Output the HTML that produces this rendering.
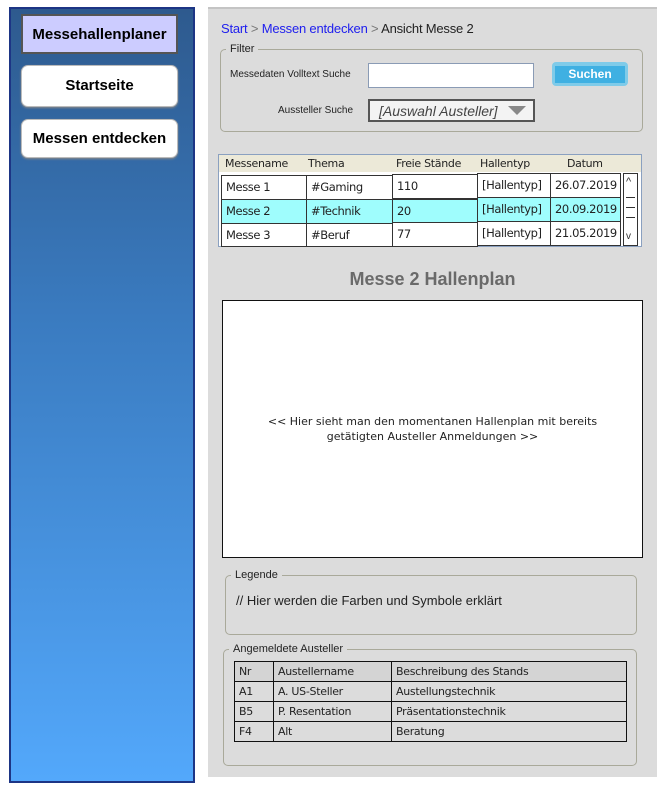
<!DOCTYPE html>
<html><head><meta charset="utf-8"><style>
*{margin:0;padding:0;box-sizing:border-box}
body{width:669px;height:800px;background:#fff;position:relative;font-family:"Liberation Sans",sans-serif;overflow:hidden}
.a{position:absolute}
.side{left:9px;top:7px;width:186px;height:776px;background:linear-gradient(#2e5a8e,#3a7bc0 40%,#53a8fb);border:2px solid #1d3585}
.btn{position:absolute;left:21px;width:157px;background:#fff;border:1px solid #bbb;border-radius:7px;font-weight:bold;font-size:15px;text-align:center;box-shadow:0 1px 2px #888}
.main{left:208px;top:7px;width:449px;height:770px;background:#dcdcdc;border-top:2px solid #c4c4c4}
.sk{font-family:"Comic Sans MS","DejaVu Sans",sans-serif;font-size:12px;color:#222}
.fs{position:absolute;border:1px solid #a9a99a;border-radius:5px}
.lg{position:absolute;background:#dcdcdc;font-size:11px;padding:0 4px;color:#222}
.cell{position:absolute;border:1.5px solid #333;background:#fff;padding-left:4px;font-size:11.5px;line-height:23px;font-family:"DejaVu Sans",sans-serif;color:#222;letter-spacing:-.4px}
.cy{background:#9ffdfd}
.hd{position:absolute;top:157px;font-size:11px;font-family:"DejaVu Sans",sans-serif;color:#222;letter-spacing:-.3px}
table{border-collapse:collapse;font-family:"DejaVu Sans",sans-serif;font-size:11px;color:#222}
td{border:1px solid #111;height:20px;padding-left:4px;letter-spacing:-.3px}
</style></head><body>
<div class="a side"></div>
<div class="btn" style="top:14px;height:40px;line-height:38px;background:#ccccff;border:2px solid #555;border-radius:0;box-shadow:none">Messehallenplaner</div>
<div class="btn" style="top:65px;height:42px;line-height:40px">Startseite</div>
<div class="btn" style="top:119px;height:39px;line-height:37px">Messen entdecken</div>

<div class="a main"></div>
<div class="a" style="left:221px;top:21px;font-size:13px;color:#777;letter-spacing:-.2px"><span style="color:#2020ee">Start</span> &gt; <span style="color:#2020ee">Messen entdecken</span> &gt; <span style="color:#222">Ansicht Messe 2</span></div>

<div class="fs" style="left:220px;top:49px;width:423px;height:83px"></div>
<div class="lg" style="left:226px;top:43px">Filter</div>
<div class="a" style="left:230px;top:69px;font-size:10px;color:#222">Messedaten Volltext Suche</div>
<div class="a" style="left:368px;top:63px;width:166px;height:25px;background:#fff;border:1px solid #8a9bb5"></div>
<div class="a" style="left:552px;top:62px;width:76px;height:24px;background:#7fcbe9;border-radius:4px"></div>
<div class="a" style="left:555px;top:66px;width:70px;height:17px;background:#3fb0e2;color:#fff;font-weight:bold;font-size:12px;text-align:center;line-height:17px">Suchen</div>
<div class="a" style="left:278px;top:105px;font-size:10px;color:#222">Aussteller Suche</div>
<div class="a" style="left:368px;top:99px;width:167px;height:23px;background:#f3f3f3;border:2px solid #555;font-style:italic;font-size:14px;color:#444;padding-left:9px;line-height:20px">[Auswahl Austeller]</div>
<div class="a" style="left:508px;top:106px;width:0;height:0;border-left:9px solid transparent;border-right:9px solid transparent;border-top:9px solid #888"></div>

<div class="a" style="left:218px;top:154px;width:424px;height:93px;border:1px solid #8aa0c0;background:#fff"></div>
<div class="a" style="left:219px;top:155px;width:422px;height:17px;background:#ece9d8"></div>
<div class="hd" style="left:225px">Messename</div>
<div class="hd" style="left:308px">Thema</div>
<div class="hd" style="left:396px">Freie Stände</div>
<div class="hd" style="left:480px">Hallentyp</div>
<div class="hd" style="left:567px">Datum</div>

<div class="cell" style="left:221px;top:175px;width:87px;height:25px">Messe 1</div>
<div class="cell" style="left:306px;top:175px;width:87px;height:25px">#Gaming</div>
<div class="cell" style="left:392px;top:174px;width:86px;height:25px">110</div>
<div class="cell" style="left:477px;top:173px;width:74px;height:25px">[Hallentyp]</div>
<div class="cell" style="left:550px;top:173px;width:71px;height:25px">26.07.2019</div>
<div class="cell cy" style="left:221px;top:199px;width:87px;height:25px">Messe 2</div>
<div class="cell cy" style="left:306px;top:199px;width:87px;height:25px">#Technik</div>
<div class="cell cy" style="left:392px;top:199px;width:86px;height:25px">20</div>
<div class="cell cy" style="left:477px;top:197px;width:74px;height:25px">[Hallentyp]</div>
<div class="cell cy" style="left:550px;top:197px;width:71px;height:25px">20.09.2019</div>
<div class="cell" style="left:221px;top:223px;width:87px;height:24px">Messe 3</div>
<div class="cell" style="left:306px;top:223px;width:87px;height:24px">#Beruf</div>
<div class="cell" style="left:392px;top:222px;width:86px;height:25px">77</div>
<div class="cell" style="left:477px;top:221px;width:74px;height:25px">[Hallentyp]</div>
<div class="cell" style="left:550px;top:221px;width:71px;height:25px">21.05.2019</div>
<div class="a" style="left:623px;top:173px;width:15px;height:73px;border:1.5px solid #333;background:#fff"></div>
<div class="a" style="left:626px;top:176px;font-size:11px;color:#333">^</div>
<div class="a" style="left:626px;top:197px;width:9px;border-top:1px solid #333"></div>
<div class="a" style="left:626px;top:207px;width:9px;border-top:1px solid #333"></div>
<div class="a" style="left:626px;top:217px;width:9px;border-top:1px solid #333"></div>
<div class="a" style="left:626px;top:231px;font-size:10px;color:#333">v</div>

<div class="a" style="left:208px;top:269px;width:449px;text-align:center;font-size:18px;font-weight:bold;color:#6a6a6a">Messe 2 Hallenplan</div>
<div class="a sk" style="left:222px;top:300px;width:421px;height:258px;background:#fff;border:1.5px solid #111;text-align:center;padding-top:113px;font-size:11px;line-height:15px">&lt;&lt; Hier sieht man den momentanen Hallenplan mit bereits<br>getätigten Austeller Anmeldungen &gt;&gt;</div>

<div class="fs" style="left:225px;top:575px;width:412px;height:60px"></div>
<div class="lg" style="left:231px;top:569px">Legende</div>
<div class="a" style="left:236px;top:593px;font-size:13px;color:#222">// Hier werden die Farben und Symbole erklärt</div>

<div class="fs" style="left:223px;top:649px;width:414px;height:117px"></div>
<div class="lg" style="left:229px;top:643px">Angemeldete Austeller</div>
<table class="a" style="left:234px;top:661px;width:393px">
<tr style="background:#d4d4d4"><td style="width:39px">Nr</td><td style="width:118px">Austellername</td><td>Beschreibung des Stands</td></tr>
<tr><td>A1</td><td>A. US-Steller</td><td>Austellungstechnik</td></tr>
<tr><td>B5</td><td>P. Resentation</td><td>Präsentationstechnik</td></tr>
<tr><td>F4</td><td>Alt</td><td>Beratung</td></tr>
</table>
</body></html>
